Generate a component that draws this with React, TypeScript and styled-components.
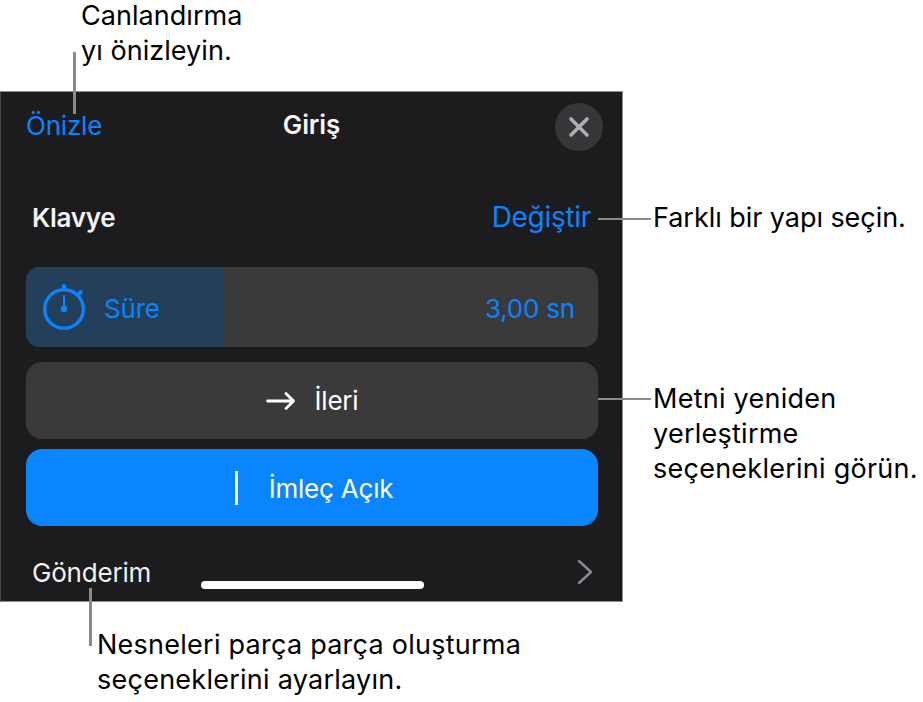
import React from "react";
import styled, { createGlobalStyle } from "styled-components";

const GlobalStyle = createGlobalStyle`
  html, body {
    margin: 0;
    padding: 0;
    background: #ffffff;
  }
  body {
    font-family: Inter, "Noto Sans", "Liberation Sans", sans-serif;
  }
`

const Stage = styled.div`
  position: relative;
  width: 923px;
  height: 702px;
  padding-top: 91px;
  box-sizing: border-box;
  overflow: hidden;
`
const Panel = styled.div`
  width: 623px;
  height: 511px;
  box-sizing: border-box;
  background: #1c1c1e;
  border: 1px solid #8e8e90;
  border-left-color: #4a4a4c;
  display: flex;
  flex-direction: column;
  padding: 0 24px 0 25px;
  position: relative;
`
const Header = styled.div`
  height: 66px;
  margin-top: 1px;
  display: flex;
  align-items: center;
  justify-content: space-between;
`
const TextLink = styled.span<{ $size?: number; $track?: number }>`
  color: #0a84ff;
  font-size: ${(p) => p.$size ?? 26}px;
  letter-spacing: ${(p) => p.$track ?? -0.2}px;
`
const HeaderLink = styled(TextLink)`
  margin-top: -2px;
`
const ValueText = styled(TextLink)`
  position: relative;
`
const Title = styled.span`
  position: absolute;
  left: 0;
  right: 0;
  top: 17px;
  text-align: center;
  color: #f5f5f7;
  font-size: 26px;
  font-weight: 600;
  letter-spacing: -0.1px;
`
const CloseButton = styled.div`
  width: 48px;
  height: 48px;
  border-radius: 50%;
  background: #363638;
  display: flex;
  align-items: center;
  justify-content: center;
  margin: 1px -5px 0 0;
`
const SectionRow = styled.div`
  height: 54px;
  margin-top: 31px;
  display: flex;
  align-items: center;
  justify-content: space-between;
  padding: 0 7px 0 6px;
`
const SectionName = styled.span`
  color: #f2f2f4;
  font-size: 26px;
  font-weight: 600;
  letter-spacing: -0.3px;
`
const DurationRow = styled.div`
  position: relative;
  height: 80px;
  box-sizing: border-box;
  margin-top: 23px;
  border-radius: 14px;
  background: #3a3a3c;
  overflow: hidden;
  display: flex;
  align-items: center;
  justify-content: space-between;
  padding: 0 23px 0 15px;
`
const DurationFill = styled.div`
  position: absolute;
  left: 0;
  top: 0;
  bottom: 0;
  background: #243f5a;
`
const DurationLabel = styled.div`
  position: relative;
  display: flex;
  align-items: center;
  gap: 17px;
`
const DurationText = styled.span`
  display: inline-block;
  padding-top: 2px;
`
const ActionButton = styled.div<{ $primary?: boolean; $top: number }>`
  height: 77px;
  box-sizing: border-box;
  margin-top: ${(p) => p.$top}px;
  padding: ${(p) => (p.$primary ? "1px 0 0 4px" : "0")};
  border-radius: 16px;
  background: ${(p) => (p.$primary ? "#0a84ff" : "#3a3a3c")};
  color: #ffffff;
  font-size: 26px;
  letter-spacing: -0.2px;
  display: flex;
  align-items: center;
  justify-content: center;
  gap: 19px;
`
const CursorBar = styled.span`
  width: 3px;
  height: 34px;
  background: #ffffff;
  margin-right: 12px;
`
const FooterRow = styled.div`
  margin-top: 19px;
  height: 54px;
  display: flex;
  align-items: center;
  justify-content: space-between;
  padding: 0 5px 0 6px;
  color: #f2f2f4;
  font-size: 26px;
  letter-spacing: -0.2px;
`
const HomeBar = styled.div`
  position: absolute;
  left: 200px;
  top: 489px;
  width: 223px;
  height: 8px;
  border-radius: 4px;
  background: #ffffff;
`
const Callout = styled.div<{ $x: number; $y: number; $track?: number }>`
  position: absolute;
  left: ${(p) => p.$x}px;
  top: ${(p) => p.$y}px;
  color: #000000;
  font-size: 27px;
  line-height: 35px;
  letter-spacing: ${(p) => p.$track ?? 0.25}px;
  white-space: nowrap;
`
const Leader = styled.div<{ $x: number; $y: number; $w: number; $h: number }>`
  position: absolute;
  left: ${(p) => p.$x}px;
  top: ${(p) => p.$y}px;
  width: ${(p) => p.$w}px;
  height: ${(p) => p.$h}px;
  background: #8a8a8c;
`

const CloseIcon = () => (
  <svg width="24" height="24" viewBox="0 0 24 24" fill="none">
    <path d="M4 4L20 20M20 4L4 20" stroke="#aeaeb2" strokeWidth="3.6" strokeLinecap="round" />
  </svg>
)

const StopwatchIcon = () => (
  <svg width="46" height="46" viewBox="0 0 46 46" fill="none">
    <circle cx="23" cy="25" r="19.3" stroke="#0a84ff" strokeWidth="3.4" />
    <path d="M23 25V12" stroke="#0a84ff" strokeWidth="2" strokeLinecap="round" />
    <circle cx="23" cy="25" r="3.3" fill="#0a84ff" />
    <path d="M23 5V2.5" stroke="#0a84ff" strokeWidth="4.5" strokeLinecap="round" />
    <path d="M37.5 10.5L39.8 8" stroke="#0a84ff" strokeWidth="4" strokeLinecap="round" />
  </svg>
)

const ArrowIcon = () => (
  <svg width="30" height="24" viewBox="0 0 30 24" fill="none">
    <path d="M1.5 12H27.5M20 4.5L27.5 12L20 19.5" stroke="#ffffff" strokeWidth="2.8" strokeLinecap="round" strokeLinejoin="round" />
  </svg>
)

const ChevronIcon = () => (
  <svg width="16" height="26" viewBox="0 0 16 26" fill="none">
    <path d="M2 2L14 13L2 24" stroke="#8a8a8e" strokeWidth="2.4" strokeLinecap="round" strokeLinejoin="round" />
  </svg>
)

const App: React.FC = () => {
  const durationShare = 34.5;

  return (
    <Stage>
      <GlobalStyle />
      <Panel>
        <Header>
          <HeaderLink>Önizle</HeaderLink>
          <Title>Giriş</Title>
          <CloseButton>
            <CloseIcon />
          </CloseButton>
        </Header>
        <SectionRow>
          <SectionName>Klavye</SectionName>
          <TextLink $size={28} $track={-0.3}>Değiştir</TextLink>
        </SectionRow>
        <DurationRow>
          <DurationFill style={{ width: `${durationShare}%` }} />
          <DurationLabel>
            <StopwatchIcon />
            <TextLink><DurationText>Süre</DurationText></TextLink>
          </DurationLabel>
          <ValueText><DurationText>3,00 sn</DurationText></ValueText>
        </DurationRow>
        <ActionButton $top={15}>
          <ArrowIcon />
          İleri
        </ActionButton>
        <ActionButton $primary $top={10}>
          <CursorBar />
          İmleç Açık
        </ActionButton>
        <FooterRow>
          Gönderim
          <ChevronIcon />
        </FooterRow>
        <HomeBar />
      </Panel>

      <Callout $x={81} $y={-2} $track={0.05}>
        Canlandırma
        <br />
        yı önizleyin.
      </Callout>
      <Leader $x={73} $y={52} $w={3} $h={62} />

      <Leader $x={598} $y={218} $w={53} $h={2} />
      <Callout $x={653} $y={200} $track={-0.05}>Farklı bir yapı seçin.</Callout>

      <Leader $x={598} $y={398} $w={53} $h={2} />
      <Callout $x={653} $y={381}>
        Metni yeniden
        <br />
        yerleştirme
        <br />
        seçeneklerini görün.
      </Callout>

      <Leader $x={89} $y={588} $w={3} $h={58} />
      <Callout $x={97} $y={627}>
        Nesneleri parça parça oluşturma
        <br />
        seçeneklerini ayarlayın.
      </Callout>
    </Stage>
  );
}
export default App;
